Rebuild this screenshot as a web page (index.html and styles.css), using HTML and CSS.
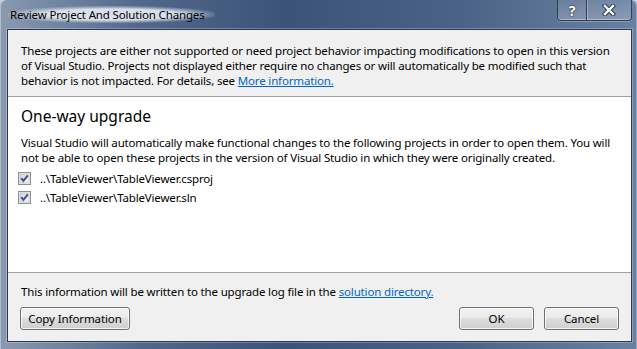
FILE: index.html
```html
<!DOCTYPE html>
<html>
    <head>
        <title>Review Project And Solution Changes</title>
        <meta charset="UTF-8">
        <link rel="stylesheet" href="styles.css">
    </head>
    <body>
        <div class="window">
            <div class="titlebar">
                <span class="caption">Review Project And Solution Changes</span>
                <div class="caption-buttons">
                    <span class="cbtn help">?</span>
                    <span class="cbtn close">
                        <svg width="14" height="12" viewBox="0 0 14 12">
                            <path d="M3 2 L11 10 M11 2 L3 10" stroke="#2a3850" stroke-width="4.4" stroke-linecap="square"/>
                            <path d="M3 2 L11 10 M11 2 L3 10" stroke="#ffffff" stroke-width="2.4" stroke-linecap="square"/>
                        </svg>
                    </span>
                </div>
            </div>
            <div class="client">
                <div class="notice">
                    These projects are either not supported or need project behavior impacting modifications to open in this version<br>
                    of Visual Studio. Projects not displayed either require no changes or will automatically be modified such that<br>
                    behavior is not impacted. For details, see <a href="#">More information.</a>
                </div>
                <div class="main">
                    <h2>One-way upgrade</h2>
                    <p>Visual Studio will automatically make functional changes to the following projects in order to open them. You will<br>
                    not be able to open these projects in the version of Visual Studio in which they were originally created.</p>
                    <ul class="projects">
                        <li>
                            <svg class="check" width="13" height="13" viewBox="0 0 13 13">
                                <defs>
                                    <linearGradient id="cb" x1="0" y1="0" x2="1" y2="1">
                                        <stop offset="0" stop-color="#d6d6d6"/>
                                        <stop offset="1" stop-color="#fbfbfb"/>
                                    </linearGradient>
                                </defs>
                                <rect x="0.5" y="0.5" width="12" height="12" fill="#f4f4f4" stroke="#8e8f8f"/>
                                <rect x="2" y="2" width="9" height="9" fill="url(#cb)" stroke="#b0b0b0" stroke-width="0.6"/>
                                <path d="M3.3 6.2 L5.4 8.8 L9.8 3.4" fill="none" stroke="#3f4f96" stroke-width="2"/>
                            </svg>
                            ..\TableViewer\TableViewer.csproj
                        </li>
                        <li>
                            <svg class="check" width="13" height="13" viewBox="0 0 13 13">
                                <rect x="0.5" y="0.5" width="12" height="12" fill="#f4f4f4" stroke="#8e8f8f"/>
                                <rect x="2" y="2" width="9" height="9" fill="url(#cb)" stroke="#b0b0b0" stroke-width="0.6"/>
                                <path d="M3.3 6.2 L5.4 8.8 L9.8 3.4" fill="none" stroke="#3f4f96" stroke-width="2"/>
                            </svg>
                            ..\TableViewer\TableViewer.sln
                        </li>
                    </ul>
                </div>
                <div class="footer">
                    <p>This information will be written to the upgrade log file in the <a href="#">solution directory.</a></p>
                    <div class="actions">
                        <button class="copy">Copy Information</button>
                        <span class="spacer"></span>
                        <button>OK</button>
                        <button>Cancel</button>
                    </div>
                </div>
            </div>
        </div>
    </body>
</html>
```

FILE: styles.css
```css
body {
    margin: 0;
    background: #c6cfdb;
    font-family: "Segoe UI", "Noto Sans", sans-serif;
    font-size: 11.5px;
    letter-spacing: -0.16px;
}

.window {
    width: 637px;
    height: 349px;
    box-sizing: border-box;
    display: flex;
    flex-direction: column;
    padding: 0 5px 7px 7px;
    border-radius: 6px 6px 0 0;
    background: linear-gradient(to right, #8a9ab0 0%, #51688b 22%, #3b5377 45%, #4a6285 72%, #6a82a1 100%);
    box-shadow: inset 1px 0 0 rgba(255, 255, 255, 0.35), inset -1px 0 0 rgba(255, 255, 255, 0.3);
}

.titlebar {
    height: 29px;
    display: flex;
    justify-content: space-between;
    align-items: flex-start;
}

.caption {
    margin-top: 6px;
    margin-left: 1px;
    padding: 0 10px 0 2px;
    line-height: 17px;
    color: #000;
    background: radial-gradient(ellipse at center, rgba(225, 230, 238, 0.95) 45%, rgba(225, 230, 238, 0) 75%);
}

.caption-buttons {
    display: flex;
    height: 20px;
    border: 1px solid #2d3d57;
    border-top: none;
    border-radius: 0 0 4px 4px;
    background: linear-gradient(rgba(255, 255, 255, 0.08), rgba(255, 255, 255, 0.22));
    box-shadow: inset 0 -1px 0 rgba(255, 255, 255, 0.35), 0 1px 0 rgba(255, 255, 255, 0.25);
}

.cbtn {
    display: flex;
    align-items: center;
    justify-content: center;
    color: #fff;
}

.help {
    width: 28px;
    border-right: 1px solid #2d3d57;
    box-shadow: 1px 0 0 rgba(255, 255, 255, 0.3);
    font-weight: bold;
    font-size: 14px;
    text-shadow: 0 0 2px #1e2a40, 0 0 1px #1e2a40;
}

.close {
    width: 44px;
}

.client {
    flex: 1;
    display: flex;
    flex-direction: column;
    border: 1px solid #2a3a52;
    background: #f0f0f0;
    box-shadow: 0 0 0 1px rgba(255, 255, 255, 0.25);
    color: #000;
    line-height: 15px;
}

a {
    color: #0066cc;
}

.notice {
    box-sizing: border-box;
    height: 67px;
    padding: 13px 13px 0 13px;
    border-bottom: 1px solid #a0a0a0;
    white-space: nowrap;
}

.main {
    box-sizing: border-box;
    height: 176px;
    padding: 8px 13px 0 13px;
    background: #fff;
    border-bottom: 1px solid #a0a0a0;
}

h2 {
    margin: 0;
    font-size: 15.5px;
    font-weight: normal;
    line-height: 22px;
    letter-spacing: 0;
}

.main p {
    margin: 8px 0 0 0;
    white-space: nowrap;
}

.projects {
    list-style: none;
    margin: 4px 0 0 -3px;
    padding: 0;
}

.projects li {
    height: 19px;
    display: flex;
    align-items: center;
    gap: 9px;
}

.footer {
    flex: 1;
    padding: 11px 12px 0 12px;
}

.footer p {
    margin: 0 0 0 1px;
}

.actions {
    display: flex;
    gap: 10px;
    margin-top: 8px;
}

.spacer {
    flex: 1;
}

button {
    height: 23px;
    width: 75px;
    padding: 0;
    font-family: "Segoe UI", "Noto Sans", sans-serif;
    font-size: 11.5px;
    letter-spacing: -0.1px;
    color: #000;
    border: 1px solid #707070;
    border-radius: 3px;
    background: linear-gradient(#f2f2f2 0%, #ebebeb 45%, #dddddd 50%, #cfcfcf 100%);
    box-shadow: inset 0 0 0 1px rgba(255, 255, 255, 0.75);
}

.copy {
    width: 110px;
}
```
